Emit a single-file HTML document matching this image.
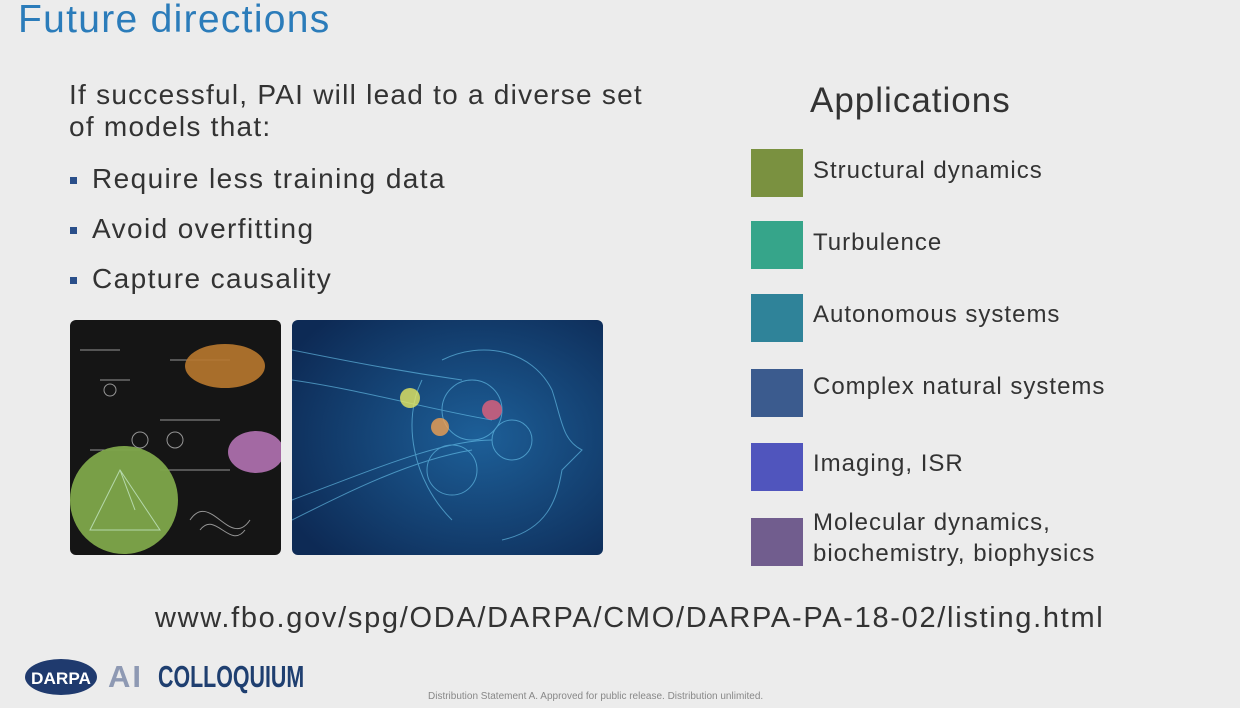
<!DOCTYPE html>
<html><head><meta charset="utf-8"><style>
body{margin:0;width:1240px;height:708px;background:#ececec;font-family:"Liberation Sans",sans-serif;position:relative;overflow:hidden;color:#333}
.a{position:absolute;white-space:nowrap}
.sq{position:absolute;left:751px;width:52px;height:48px}
.lb{position:absolute;left:813px;font-size:24px;letter-spacing:1px;color:#333;line-height:31px;white-space:nowrap}
.bul{position:absolute;left:70px;width:7px;height:7px;background:#2a4f8a}
.t{font-size:28px;letter-spacing:1.4px}
</style></head><body>
<div class="a" style="left:18px;top:-2px;font-size:39px;letter-spacing:1.3px;color:#2b7cba">Future directions</div>
<div class="a t" style="left:69px;top:79px;line-height:32px;letter-spacing:1.25px">If successful, PAI will lead to a diverse set<br>of models that:</div>
<div class="bul" style="top:177px"></div><div class="a t" style="left:92px;top:163px">Require less training data</div>
<div class="bul" style="top:227px"></div><div class="a t" style="left:92px;top:213px">Avoid overfitting</div>
<div class="bul" style="top:277px"></div><div class="a t" style="left:92px;top:263px">Capture causality</div>

<svg class="a" style="left:70px;top:320px" width="211" height="235">
<rect width="211" height="235" rx="6" fill="#151515"/>
<g stroke="#ccc" stroke-width="1" fill="none" opacity=".7">
<path d="M10 30h40M30 60h30M100 40h60M90 100h60M20 130h50M90 150h70M120 200c20-30 40 30 60 0M130 210c15-20 30 20 45 0"/>
<circle cx="70" cy="120" r="8"/><circle cx="105" cy="120" r="8"/><circle cx="40" cy="70" r="6"/>
</g>
<ellipse cx="155" cy="46" rx="40" ry="22" fill="#b8782e" opacity=".9"/>
<ellipse cx="186" cy="132" rx="28" ry="21" fill="#b272b2" opacity=".9"/>
<circle cx="54" cy="180" r="54" fill="#7ea64a" opacity=".95"/>
<path d="M20 210l30-60 40 60zM50 150l15 40" stroke="#dfe" fill="none" opacity=".6"/>
</svg>

<svg class="a" style="left:292px;top:320px" width="311" height="235">
<defs><radialGradient id="g" cx="60%" cy="50%" r="70%"><stop offset="0" stop-color="#1d5f98"/><stop offset="1" stop-color="#0d2a55"/></radialGradient></defs>
<rect width="311" height="235" rx="6" fill="url(#g)"/>
<g stroke="#6cc8f0" stroke-width="1" fill="none" opacity=".6">
<path d="M150 40c40-20 90-10 110 30c10 30 10 50 30 60l-20 20c-5 30-15 60-60 70M130 60c-20 40-10 100 30 140M0 200c60-30 120-60 180-70M0 180c80-30 150-60 200-60M0 30c50 10 100 20 170 30M0 60c70 10 140 30 200 40"/>
<circle cx="180" cy="90" r="30"/><circle cx="220" cy="120" r="20"/><circle cx="160" cy="150" r="25"/>
</g>
<circle cx="118" cy="78" r="10" fill="#e6e860" opacity=".8"/>
<circle cx="148" cy="107" r="9" fill="#f0a050" opacity=".8"/>
<circle cx="200" cy="90" r="10" fill="#e4607a" opacity=".8"/>
</svg>

<div class="a" style="left:810px;top:81px;font-size:35px;letter-spacing:1px;color:#333">Applications</div>
<div class="sq" style="top:149px;background:#7a9140"></div><div class="lb" style="top:155px">Structural dynamics</div>
<div class="sq" style="top:221px;background:#36a58a"></div><div class="lb" style="top:227px">Turbulence</div>
<div class="sq" style="top:294px;background:#2f8399"></div><div class="lb" style="top:299px">Autonomous systems</div>
<div class="sq" style="top:369px;background:#3b5b8e"></div><div class="lb" style="top:371px">Complex natural systems</div>
<div class="sq" style="top:443px;background:#5055bd"></div><div class="lb" style="top:448px">Imaging, ISR</div>
<div class="sq" style="top:518px;background:#715d8e"></div><div class="lb" style="top:507px">Molecular dynamics,<br>biochemistry, biophysics</div>

<div class="a" style="left:155px;top:602px;font-size:29px;letter-spacing:1.7px;color:#333">www.fbo.gov/spg/ODA/DARPA/CMO/DARPA-PA-18-02/listing.html</div>

<svg class="a" style="left:24px;top:658px" width="74" height="38"><ellipse cx="37" cy="19" rx="36" ry="18" fill="#1f3a6e"/><text x="37" y="26" text-anchor="middle" font-family="Liberation Sans" font-weight="bold" font-size="17" fill="#fff" textLength="60" lengthAdjust="spacingAndGlyphs">DARPA</text></svg>
<div class="a" style="left:108px;top:659px;font-size:31px;font-weight:bold;color:#8e99b3;letter-spacing:2px">AI</div>
<div class="a" style="left:158px;top:659px;font-size:31px;font-weight:bold;color:#1f3f70;transform:scaleX(.69);transform-origin:left">COLLOQUIUM</div>
<div class="a" style="left:428px;top:691px;font-size:10px;color:#888">Distribution Statement A. Approved for public release. Distribution unlimited.</div>
</body></html>
